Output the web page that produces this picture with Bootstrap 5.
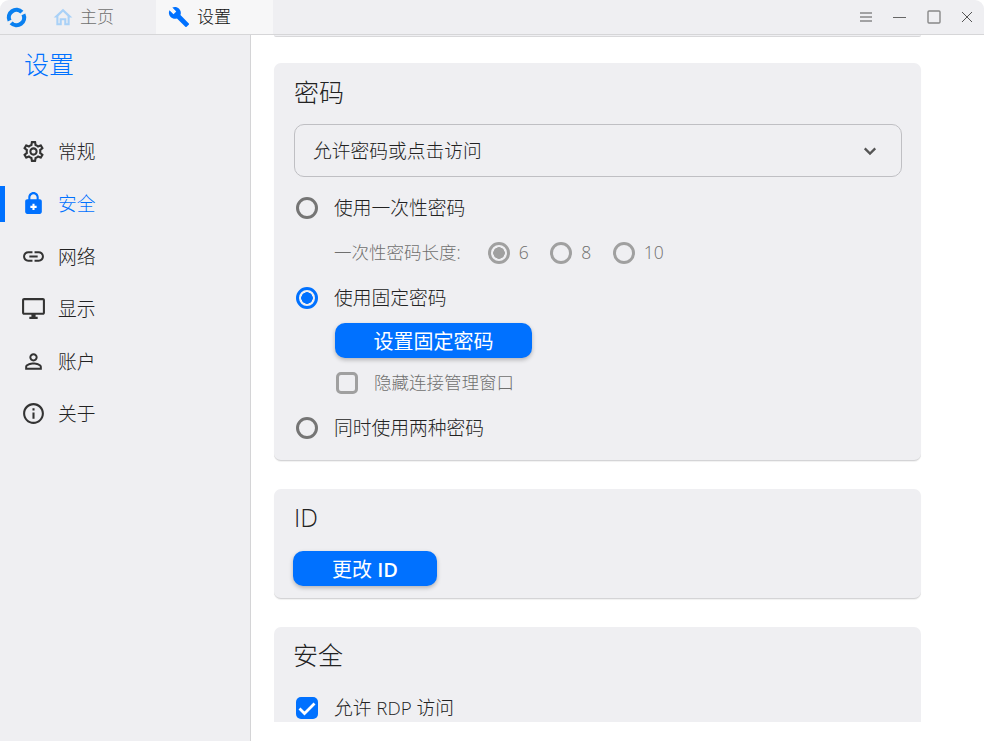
<!DOCTYPE html>
<html lang="zh">
<head>
<meta charset="utf-8">
<title>设置</title>
<link href="https://cdn.jsdelivr.net/npm/bootstrap@5.3.0/dist/css/bootstrap.min.css" rel="stylesheet">
<style>
html,body{height:100%;margin:0;background:#fff;overflow:hidden}
body{font-family:"Open Sans","Noto Sans CJK SC",sans-serif;font-weight:300;color:#222;font-size:18.75px;line-height:1.2}
.app-win{width:984px;height:741px;border-radius:9px 9px 0 0;overflow:hidden;background:#fff}
.title-strip{height:35px;background:#efeff2;border-bottom:1px solid #d6d6d8;padding-left:6px}
.tab-home{width:123px;color:#6f6f6f;font-size:17px;padding-left:26px;gap:7px}
.tab-set{width:117px;height:34px;background:#f7f7f8;color:#111;font-size:17px;padding-left:12px;gap:7px;margin-left:6px}
.win-ctl{gap:19px;padding-right:10px;color:#666}
.body-area{height:706px}
.side-col{width:251px;background:#efeff2;border-right:1px solid #d4d4d6;flex:none}
.side-head{color:#0071ff;font-size:25px;padding:14px 0 0 24px;height:90px;line-height:30px}
.side-item{height:52.5px;color:#222;font-size:18.75px;padding-left:21px;gap:12px;position:relative}
.side-item span{padding-top:1px}
.side-item.on{color:#0071ff}
.side-item.on::before{content:"";position:absolute;left:0;top:8px;width:5px;height:36px;background:#0071ff}
.main-col{width:733px;height:687px;padding:0 63px 0 23px;overflow:hidden}
.stub-card{height:2px;background:#efeff2;border-bottom:1px solid #d8d8da;border-radius:0 0 6px 6px;margin-bottom:26px}
.pane{background:#efeff2;border-radius:7px;padding:14px 19px 21px 20px;border-bottom:1px solid #d4d4d6;margin-bottom:28px;box-shadow:0 1px 1px rgba(0,0,0,.06)}
.pane-title{font-size:25px;color:#222;line-height:30px;font-weight:300;margin:0 0 17px}
.pw-select.form-select{height:53px;width:608px;border:1.5px solid #bfbfc3;border-radius:10px;background-color:#efeff2;color:#222;font-size:18.75px;font-weight:300;padding:2px 40px 0 18px;background-image:url("data:image/svg+xml,%3csvg xmlns='http://www.w3.org/2000/svg' viewBox='0 0 16 16'%3e%3cpath fill='none' stroke='%23555' stroke-width='2.6' d='M2 5l6 6 6-6'/%3e%3c/svg%3e");background-size:14px 14px;background-position:right 24px center;box-shadow:none;font-family:inherit}
.opt-row{height:22px;gap:16px;color:#222;margin:23px 0 0 2px}
.opt-row.top{margin-top:20px}
.opt-row label{margin:0}
.opt-row .form-check-input[type=radio],.sub-row .form-check-input{width:22px;height:22px;margin:0;flex:none;border:3px solid #757575;background:transparent;box-shadow:none;opacity:1}
.opt-row .form-check-input[type=radio]:checked{border-color:#0071ff;background:radial-gradient(circle,#0071ff 0 5.5px,transparent 6px)}
.sub-row{height:22px;font-size:17.5px;color:#6f6f6f;margin:23px 0 0 40px}
.sub-row .lead-txt{margin:0 27px 2px 0}
.sub-row .form-check-input{border-color:#a0a0a0}
.sub-row .form-check-input:checked{background:radial-gradient(circle,#a0a0a0 0 5.5px,transparent 6px)}
.sub-row label{margin:0 0 2px 9px;width:31.5px;opacity:1!important}
.blue-btn.btn{background:#0071ff;border:0;color:#fff;font-size:20px;font-weight:400;border-radius:10px;height:35px;padding:2px 0 0;box-shadow:0 2px 4px rgba(0,0,0,.25);line-height:33px}
.fix-btn{width:197px;margin:14px 0 0 41px;display:block}
.id-btn{width:144px;display:block;margin-left:-1px}
.id-btn b{font-weight:600}
.hide-row{height:22px;margin:14px 0 0 42px;gap:16px;font-size:17.5px;color:#6f6f6f}
.hide-row label{margin:0 0 2px}
.chk-grey.form-check-input{width:22px;height:22px;margin:0;border:3px solid #a0a0a0;border-radius:5px;background:transparent;box-shadow:none;flex:none;opacity:1}
.chk-blue.form-check-input:checked{width:22px;height:22px;margin:0;border:0;border-radius:5px;background-color:#0071ff;box-shadow:none;flex:none;background-size:22px;background-image:url("data:image/svg+xml,%3csvg xmlns='http://www.w3.org/2000/svg' viewBox='0 0 22 22'%3e%3cpath fill='none' stroke='%23fff' stroke-width='2.8' d='M3.500 11.500l5 5 10-10'/%3e%3c/svg%3e")}
.id-pane{height:110px;padding-top:13px}
.id-pane .pane-title{margin-bottom:19px}
.pane-clip{height:95px;overflow:hidden;border-bottom:0;margin:0;border-radius:7px 7px 0 0;box-shadow:none;padding-top:13px}
.pane-clip .pane-title{margin-bottom:27px;margin-left:-1px}
.pane-clip .opt-row{margin-top:0}
</style>
</head>
<body>
<div class="app-win d-flex flex-column">
  <div class="title-strip d-flex align-items-center">
    <svg width="21" height="21" viewBox="0 0 21 21" aria-hidden="true"><g fill="none" stroke="#0a80f0" stroke-width="4.200"><path d="M15.900 5.100A7.600 7.600 0 0 0 3.600 13.700"/><path d="M5.100 15.900A7.600 7.600 0 0 0 17.400 7.300"/></g></svg>
    <div class="tab-home d-flex align-items-center">
      <svg width="20" height="20" viewBox="0 0 24 24" fill="#a9d1f7" aria-hidden="true"><path d="M12 2 .8 12.600H4V22h6.500v-6h3v6H20v-9.400h3.200zm5.500 9V19.500h-1.500v-6H8v6H6.500V11L12 5.800z"/></svg>
      <span>主页</span>
    </div>
    <div class="tab-set d-flex align-items-center">
      <svg width="22" height="22" viewBox="0 0 24 24" fill="#0071ff" aria-hidden="true"><path d="M22.700 19l-9.100-9.100c.9-2.300.4-5-1.500-6.900-2-2-5-2.400-7.400-1.300L9 6 6 9 1.600 4.700C.4 7.100.9 10.100 2.900 12.100c1.900 1.900 4.600 2.400 6.900 1.500l9.100 9.100c.4.4 1 .4 1.400 0l2.300-2.300c.5-.4.5-1.100.1-1.400z"/></svg>
      <span>设置</span>
    </div>
    <div class="win-ctl d-flex align-items-center ms-auto">
      <svg width="14" height="14" viewBox="0 0 14 14" fill="none" stroke="#555" aria-hidden="true"><path d="M1 3h12M1 7h12M1 11h12"/></svg>
      <svg width="16" height="14" viewBox="0 0 16 14" fill="none" stroke="#666" aria-hidden="true"><path d="M1 7.500h13"/></svg>
      <svg width="14" height="14" viewBox="0 0 14 14" fill="none" stroke="#888" stroke-width="1.400" aria-hidden="true"><rect x="1" y="1" width="12" height="12" rx="1"/></svg>
      <svg width="14" height="14" viewBox="0 0 14 14" fill="none" stroke="#555" aria-hidden="true"><path d="M2 2l10 10M12 2 2 12"/></svg>
    </div>
  </div>
  <div class="body-area d-flex">
    <nav class="side-col">
      <div class="side-head">设置</div>
      <div class="side-item d-flex align-items-center"><svg width="25" height="25" viewBox="0 0 24 24" fill="#333" aria-hidden="true"><path d="M19.43 12.98c.04-.32.07-.64.07-.98 0-.34-.03-.66-.07-.98l2.11-1.65c.19-.15.24-.42.12-.64l-2-3.46c-.09-.16-.26-.25-.44-.25-.06 0-.12.01-.17.03l-2.49 1c-.52-.4-1.08-.73-1.69-.98l-.38-2.65C14.46 2.18 14.25 2 14 2h-4c-.25 0-.46.18-.49.42l-.38 2.65c-.61.25-1.17.59-1.69.98l-2.49-1c-.06-.02-.12-.03-.18-.03-.17 0-.34.09-.43.25l-2 3.46c-.13.22-.07.49.12.64l2.11 1.65c-.04.32-.07.65-.07.98 0 .33.03.66.07.98l-2.11 1.65c-.19.15-.24.42-.12.64l2 3.46c.09.16.26.25.44.25.06 0 .12-.01.17-.03l2.49-1c.52.4 1.08.73 1.69.98l.38 2.65c.03.24.24.42.49.42h4c.25 0 .46-.18.49-.42l.38-2.65c.61-.25 1.17-.59 1.69-.98l2.49 1c.06.02.12.03.18.03.17 0 .34-.09.43-.25l2-3.46c.12-.22.07-.49-.12-.64l-2.11-1.65zm-1.98-1.71c.04.31.05.52.05.73 0 .21-.02.43-.05.73l-.14 1.13.89.7 1.08.84-.7 1.21-1.27-.51-1.04-.42-.9.68c-.43.32-.84.56-1.25.73l-1.06.43-.16 1.13-.2 1.35h-1.4l-.19-1.35-.16-1.13-1.06-.43c-.43-.18-.83-.41-1.23-.71l-.91-.7-1.06.43-1.27.51-.7-1.21 1.08-.84.89-.7-.14-1.13c-.03-.31-.05-.54-.05-.74s.02-.43.05-.73l.14-1.13-.89-.7-1.08-.84.7-1.21 1.27.51 1.04.42.9-.68c.43-.32.84-.56 1.25-.73l1.06-.43.16-1.13.2-1.35h1.39l.19 1.35.16 1.13 1.06.43c.43.18.83.41 1.23.71l.91.7 1.06-.43 1.27-.51.7 1.21-1.07.85-.89.7.14 1.13zM12 8c-2.21 0-4 1.79-4 4s1.79 4 4 4 4-1.79 4-4-1.79-4-4-4zm0 6c-1.1 0-2-.9-2-2s.9-2 2-2 2 .9 2 2-.9 2-2 2z"/></svg><span>常规</span></div>
      <div class="side-item on d-flex align-items-center"><svg width="25" height="25" viewBox="0 0 24 24" fill="#0071ff" aria-hidden="true"><path d="M18 8h-1V6c0-2.760-2.240-5-5-5S7 3.240 7 6v2H6c-1.100 0-2 .9-2 2v10c0 1.100.9 2 2 2h12c1.100 0 2-.9 2-2V10c0-1.100-.9-2-2-2zM9 6c0-1.660 1.340-3 3-3s3 1.340 3 3v2H9V6z"/><path d="M12 12.200v6M9 15.200h6" stroke="#fff" stroke-width="2" fill="none"/></svg><span>安全</span></div>
      <div class="side-item d-flex align-items-center"><svg width="25" height="25" viewBox="0 0 24 24" fill="#333" aria-hidden="true"><path d="M3.900 12c0-1.710 1.390-3.100 3.100-3.100h4V7H7c-2.760 0-5 2.240-5 5s2.240 5 5 5h4v-1.900H7c-1.710 0-3.100-1.390-3.100-3.100zM8 13h8v-2H8v2zm9-6h-4v1.900h4c1.710 0 3.100 1.390 3.100 3.100s-1.390 3.100-3.100 3.100h-4V17h4c2.760 0 5-2.240 5-5s-2.240-5-5-5z"/></svg><span>网络</span></div>
      <div class="side-item d-flex align-items-center"><svg width="25" height="25" viewBox="0 0 24 24" fill="#333" aria-hidden="true"><path d="M21 2H3c-1.100 0-2 .9-2 2v12c0 1.100.9 2 2 2h7v2H8v2h8v-2h-2v-2h7c1.100 0 2-.9 2-2V4c0-1.100-.9-2-2-2zm0 14H3V4h18v12z"/></svg><span>显示</span></div>
      <div class="side-item d-flex align-items-center"><svg width="25" height="25" viewBox="0 0 24 24" fill="#333" aria-hidden="true"><path d="M12 5.900c1.160 0 2.100.94 2.100 2.100s-.94 2.100-2.100 2.100S9.900 9.160 9.900 8s.94-2.100 2.100-2.100m0 9c2.970 0 6.100 1.460 6.100 2.100v1.100H5.900V17c0-.64 3.130-2.100 6.100-2.100M12 4C9.790 4 8 5.790 8 8s1.790 4 4 4 4-1.790 4-4-1.790-4-4-4zm0 9c-2.670 0-8 1.340-8 4v3h16v-3c0-2.660-5.330-4-8-4z"/></svg><span>账户</span></div>
      <div class="side-item d-flex align-items-center"><svg width="25" height="25" viewBox="0 0 24 24" fill="#333" aria-hidden="true"><path d="M11 7h2v2h-2zm0 4h2v6h-2zm1-9C6.480 2 2 6.480 2 12s4.480 10 10 10 10-4.480 10-10S17.520 2 12 2zm0 18c-4.410 0-8-3.590-8-8s3.590-8 8-8 8 3.590 8 8-3.590 8-8 8z"/></svg><span>关于</span></div>
    </nav>
    <main class="main-col">
      <div class="stub-card"></div>
      <section class="pane">
        <h5 class="pane-title">密码</h5>
        <select class="form-select pw-select" aria-label="访问方式"><option>允许密码或点击访问</option></select>
        <div class="opt-row top d-flex align-items-center"><input class="form-check-input" type="radio" name="pw" id="p1"><label for="p1">使用一次性密码</label></div>
        <div class="sub-row d-flex align-items-center">
          <span class="lead-txt">一次性密码长度:</span>
          <input class="form-check-input" type="radio" name="ln" id="l6" checked disabled><label for="l6">6</label>
          <input class="form-check-input" type="radio" name="ln" id="l8" disabled><label for="l8">8</label>
          <input class="form-check-input" type="radio" name="ln" id="l10" disabled><label for="l10">10</label>
        </div>
        <div class="opt-row d-flex align-items-center"><input class="form-check-input" type="radio" name="pw" id="p2" checked><label for="p2">使用固定密码</label></div>
        <button type="button" class="btn blue-btn fix-btn">设置固定密码</button>
        <div class="hide-row d-flex align-items-center"><input class="form-check-input chk-grey" type="checkbox" id="h1"><label for="h1">隐藏连接管理窗口</label></div>
        <div class="opt-row d-flex align-items-center"><input class="form-check-input" type="radio" name="pw" id="p3"><label for="p3">同时使用两种密码</label></div>
      </section>
      <section class="pane id-pane">
        <h5 class="pane-title">ID</h5>
        <button type="button" class="btn blue-btn id-btn">更改 <b>ID</b></button>
      </section>
      <section class="pane pane-clip">
        <h5 class="pane-title">安全</h5>
        <div class="opt-row d-flex align-items-center"><input class="form-check-input chk-blue" type="checkbox" id="r1" checked><label for="r1">允许 RDP 访问</label></div>
      </section>
    </main>
  </div>
</div>
<script src="https://cdn.jsdelivr.net/npm/bootstrap@5.3.0/dist/js/bootstrap.bundle.min.js"></script>
</body>
</html>
